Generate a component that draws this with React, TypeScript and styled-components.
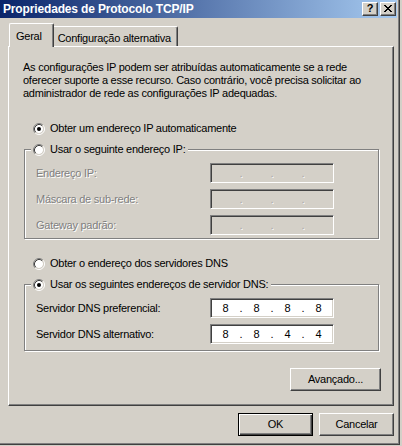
import React from 'react';
import styled, { createGlobalStyle, css } from 'styled-components';

const GlobalStyle = createGlobalStyle`
  html, body { margin: 0; padding: 0; background: #D4D0C8; }
  body {
    font-family: "Liberation Sans", Arial, sans-serif;
    font-size: 11px;
    letter-spacing: -0.25px;
    color: #000;
  }
  * { box-sizing: border-box; }
`;

const FACE = '#D4D0C8';
const SHADOW = '#808080';
const DARK = '#404040';

const Window = styled.div`
  width: 400px;
  height: 445px;
  background: ${FACE};
  border-right: 1px solid ${DARK};
  border-bottom: 1px solid ${DARK};
  box-shadow: inset -1px -1px 0 ${SHADOW};
  padding: 0 2px 2px 0;
  display: flex;
  flex-direction: column;
`;

const TitleBar = styled.div`
  height: 18px;
  flex: none;
  display: flex;
  align-items: center;
  justify-content: space-between;
  padding: 0 1px 0 3px;
  background: linear-gradient(to right, #0a246a, #a6caf0);
`;

const TitleText = styled.span`
  color: #fff;
  font-weight: bold;
  font-size: 12px;
  letter-spacing: -0.15px;
  line-height: 13px;
  white-space: nowrap;
`;

const CaptionButtons = styled.div`
  display: flex;
  gap: 2px;
`;

const CaptionButton = styled.div`
  width: 16px;
  height: 14px;
  background: ${FACE};
  border: 1px solid;
  border-color: #fff ${DARK} ${DARK} #fff;
  box-shadow: inset -1px -1px 0 ${SHADOW};
  display: flex;
  align-items: center;
  justify-content: center;
  font-weight: bold;
  font-size: 11px;
  line-height: 11px;
  letter-spacing: 0;
  padding-bottom: 1px;
`;

const Body = styled.div`
  flex: 1;
  display: flex;
  flex-direction: column;
  padding: 5px 3px 0 8px;
`;

const TabStrip = styled.div`
  height: 23px;
  display: flex;
  align-items: flex-end;
  padding-left: 1px;
`;

const Tab = styled.div<{ $active?: boolean }>`
  display: flex;
  align-items: flex-start;
  white-space: nowrap;
  line-height: 13px;
  background: ${FACE};
  border-top: 1px solid #fff;
  border-right: 1px solid ${DARK};
  box-shadow: inset -1px 0 0 ${SHADOW};
  border-top-right-radius: 2px;
  ${(p) =>
    p.$active
      ? css`
          position: relative;
          z-index: 1;
          height: 24px;
          margin-bottom: -1px;
          padding: 6px 11px 0 6px;
          border-left: 1px solid #fff;
          border-top-left-radius: 2px;
        `
      : css`
          height: 20px;
          padding: 5px 6px 0 4px;
        `}
`;

const Panel = styled.div`
  height: 360px;
  flex: none;
  display: flex;
  flex-direction: column;
  border: 1px solid;
  border-color: #fff ${DARK} ${DARK} #fff;
  box-shadow: inset -1px -1px 0 ${SHADOW};
  padding: 14px 14px 0 14px;
`;

const Description = styled.p`
  margin: 0;
  line-height: 13px;
  white-space: nowrap;
`;

const RadioRow = styled.div<{ $mt: number }>`
  display: flex;
  align-items: center;
  gap: 5px;
  height: 13px;
  line-height: 13px;
  margin: ${(p) => p.$mt}px 0 0 10px;
  white-space: nowrap;
`;

const Group = styled.div<{ $mt: number; $pb: number }>`
  display: flex;
  flex-direction: column;
  margin: ${(p) => p.$mt}px 0 0 1px;
  padding-bottom: ${(p) => p.$pb}px;
  border: 1px solid ${SHADOW};
  box-shadow: inset 1px 1px 0 #fff, 1px 1px 0 #fff;
`;

const Legend = styled.div`
  align-self: flex-start;
  display: flex;
  align-items: center;
  gap: 5px;
  height: 13px;
  line-height: 13px;
  margin: -7px 0 0 6px;
  padding: 0 3px 0 2px;
  background: ${FACE};
  white-space: nowrap;
`;

const FieldGrid = styled.div<{ $gap: number }>`
  display: grid;
  grid-template-columns: 174px 124px;
  row-gap: ${(p) => p.$gap}px;
  align-items: center;
  margin: 7px 0 0 11px;
`;

const FieldLabel = styled.span<{ $disabled?: boolean }>`
  line-height: 13px;
  white-space: nowrap;
  ${(p) =>
    p.$disabled &&
    css`
      color: ${SHADOW};
      text-shadow: 1px 1px 0 #fff;
    `}
`;

const IpBox = styled.div<{ $disabled?: boolean }>`
  width: 124px;
  height: 20px;
  display: flex;
  align-items: center;
  padding: 0 1px;
  border: 1px solid;
  border-color: ${SHADOW} #fff #fff ${SHADOW};
  box-shadow: inset 1px 1px 0 ${DARK}, inset -1px -1px 0 ${FACE};
  background: ${(p) => (p.$disabled ? FACE : '#fff')};
  line-height: 13px;
  letter-spacing: 0;
`;

const IpSegment = styled.span`
  width: 27px;
  text-align: center;
`;

const IpDot = styled.span<{ $disabled?: boolean }>`
  width: 4px;
  text-align: center;
  ${(p) =>
    p.$disabled &&
    css`
      color: #a8a8a8;
      text-shadow: 1px 1px 0 #fff;
    `}
`;

const PushButton = styled.div<{ $default?: boolean; $width: number }>`
  width: ${(p) => p.$width}px;
  height: 23px;
  display: flex;
  align-items: center;
  justify-content: center;
  background: ${FACE};
  line-height: 13px;
  border: 1px solid;
  ${(p) =>
    p.$default
      ? css`
          border-color: #000;
          box-shadow: inset 1px 1px 0 #fff, inset -1px -1px 0 ${DARK}, inset -2px -2px 0 ${SHADOW};
        `
      : css`
          border-color: #fff ${DARK} ${DARK} #fff;
          box-shadow: inset -1px -1px 0 ${SHADOW};
        `}
`;

const AdvancedButton = styled(PushButton)`
  align-self: flex-end;
  margin: 17px -2px 0 0;
`;

const ButtonRow = styled.div`
  display: flex;
  justify-content: flex-end;
  gap: 6px;
  margin-top: 7px;
`;

const RadioSvg = styled.svg`
  flex: none;
  display: block;
`;

const Radio = ({ checked }: { checked?: boolean }) => (
  <RadioSvg width="12" height="12" viewBox="0 0 12 12">
    <circle cx="6" cy="6" r="4" fill="#fff" />
    <path d="M2.11 9.89 A5.5 5.5 0 0 1 9.89 2.11" stroke={SHADOW} fill="none" />
    <path d="M9.89 2.11 A5.5 5.5 0 0 1 2.11 9.89" stroke="#fff" fill="none" />
    <path d="M2.82 9.18 A4.5 4.5 0 0 1 9.18 2.82" stroke={DARK} fill="none" />
    <path d="M9.18 2.82 A4.5 4.5 0 0 1 2.82 9.18" stroke={FACE} fill="none" />
    {checked && <circle cx="6" cy="6" r="2" fill="#000" />}
  </RadioSvg>
);

const CloseGlyph = () => (
  <svg width="8" height="7" viewBox="0 0 8 7" shapeRendering="crispEdges">
    <path
      fill="#000"
      d="M0 0h2v1h-2zM6 0h2v1h-2zM1 1h2v1h-2zM5 1h2v1h-2zM2 2h4v1h-4zM3 3h2v1h-2zM2 4h4v1h-4zM1 5h2v1h-2zM5 5h2v1h-2zM0 6h2v1h-2zM6 6h2v1h-2z"
    />
  </svg>
);

const IpField = ({ values, disabled }: { values?: string[]; disabled?: boolean }) => {
  const v = values ?? ['', '', '', ''];
  return (
    <IpBox $disabled={disabled}>
      {v.map((s, i) => (
        <React.Fragment key={i}>
          {i > 0 && <IpDot $disabled={disabled}>.</IpDot>}
          <IpSegment>{s}</IpSegment>
        </React.Fragment>
      ))}
    </IpBox>
  );
};

export default function App() {
  return (
    <>
      <GlobalStyle />
      <Window>
        <TitleBar>
          <TitleText>Propriedades de Protocolo TCP/IP</TitleText>
          <CaptionButtons>
            <CaptionButton>?</CaptionButton>
            <CaptionButton>
              <CloseGlyph />
            </CaptionButton>
          </CaptionButtons>
        </TitleBar>
        <Body>
          <TabStrip>
            <Tab $active>Geral</Tab>
            <Tab>Configuração alternativa</Tab>
          </TabStrip>
          <Panel>
            <Description>
              As configurações IP podem ser atribuídas automaticamente se a rede
              <br />
              oferecer suporte a esse recurso. Caso contrário, você precisa solicitar ao
              <br />
              administrador de rede as configurações IP adequadas.
            </Description>
            <RadioRow $mt={22}>
              <Radio checked />
              <span>Obter um endereço IP automaticamente</span>
            </RadioRow>
            <Group $mt={14} $pb={3}>
              <Legend>
                <Radio />
                <span>Usar o seguinte endereço IP:</span>
              </Legend>
              <FieldGrid $gap={6}>
                <FieldLabel $disabled>Endereço IP:</FieldLabel>
                <IpField disabled />
                <FieldLabel $disabled>Máscara de sub-rede:</FieldLabel>
                <IpField disabled />
                <FieldLabel $disabled>Gateway padrão:</FieldLabel>
                <IpField disabled />
              </FieldGrid>
            </Group>
            <RadioRow $mt={18}>
              <Radio />
              <span>Obter o endereço dos servidores DNS</span>
            </RadioRow>
            <Group $mt={14} $pb={6}>
              <Legend>
                <Radio checked />
                <span>Usar os seguintes endereços de servidor DNS:</span>
              </Legend>
              <FieldGrid $gap={6}>
                <FieldLabel>Servidor DNS preferencial:</FieldLabel>
                <IpField values={['8', '8', '8', '8']} />
                <FieldLabel>Servidor DNS alternativo:</FieldLabel>
                <IpField values={['8', '8', '4', '4']} />
              </FieldGrid>
            </Group>
            <AdvancedButton $width={91}>Avançado...</AdvancedButton>
          </Panel>
          <ButtonRow>
            <PushButton $default $width={75}>OK</PushButton>
            <PushButton $width={75}>Cancelar</PushButton>
          </ButtonRow>
        </Body>
      </Window>
    </>
  );
}
